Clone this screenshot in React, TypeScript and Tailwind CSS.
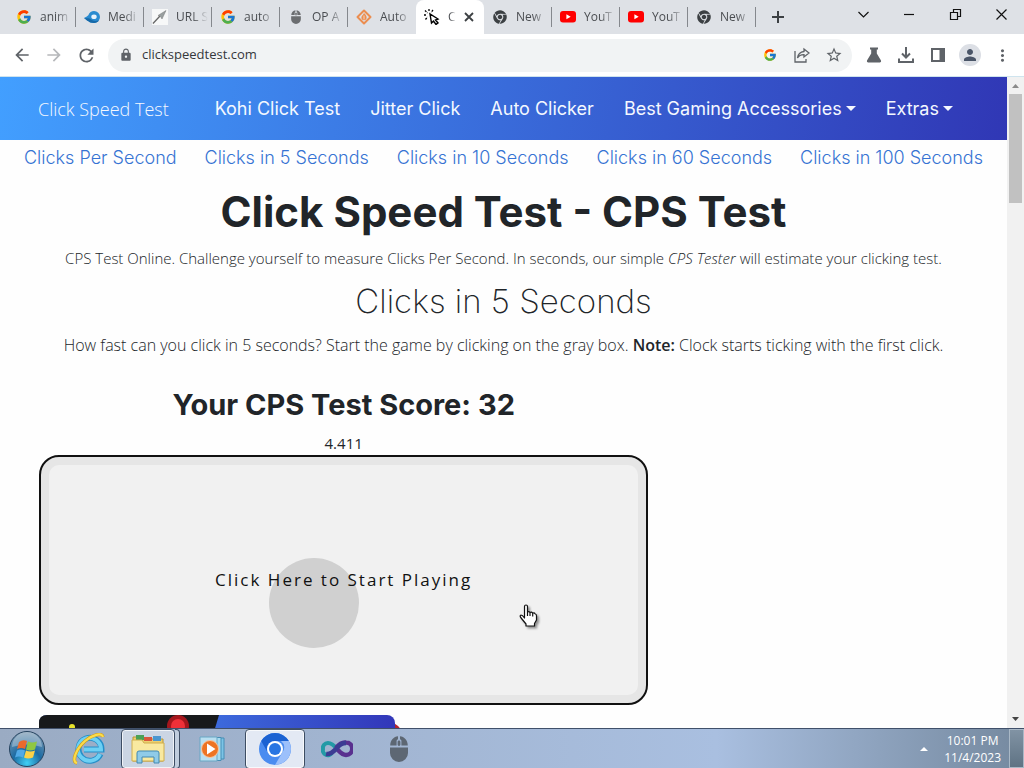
import React from "react";
import { FcGoogle } from "react-icons/fc";
import { FaChrome } from "react-icons/fa";
import {
  MdArrowBack,
  MdArrowForward,
  MdLock,
  MdMoreVert,
  MdPerson,
  MdRefresh,
  MdStarBorder,
} from "react-icons/md";

interface Tab {
  title: string;
  icon: React.ReactNode;
  active?: boolean;
  divider?: boolean;
}

const MouseIcon = ({ className }: { className: string }) => (
  <svg viewBox="0 0 18 26" className={className} aria-hidden="true">
    <path
      d="M8 0.3C3.800 0.700 0.300 4 0.200 9.500H6.600V4.500L8 3zM10 0.300C14.200 0.700 17.700 4 17.800 9.500H11.400V4.500L10 3zM0 11.500H18V17a9 9 0 0 1-18 0z"
      fill="currentColor"
    />
    <rect x="7.600" y="4.500" width="2.800" height="5.500" rx="1.400" fill="currentColor" />
  </svg>
);

const YoutubeIcon = () => (
  <svg viewBox="0 0 16 12" className="h-3 w-4" aria-hidden="true">
    <rect width="16" height="11.500" rx="3" fill="#f00" />
    <path d="M6.400 3.300v5l4.300-2.500z" fill="#fff" />
  </svg>
);

const MediaIcon = () => (
  <svg viewBox="0 0 16 12" className="h-3 w-4" aria-hidden="true">
    <path
      d="M0 7C2 6 3 5.500 4.300 4.200 5.500 1.300 7.500 0 10 0a6 6 0 0 1 0 12C7 12 5.500 11.300 4.500 10.300 3 9.500 2 8.500 0 7z"
      fill="#2a8bd0"
    />
    <path d="M0 7c2 1.500 3 2.500 4.500 3.300C5.500 11.300 7 12 10 12c2 0 4-1 5-2.800-4 1.500-7 .3-9-1.500C4 7 2 7.400 0 7z" fill="#1769a8" />
    <ellipse cx="10" cy="5.700" rx="2.700" ry="2.300" fill="#e7f2fb" />
  </svg>
);

const UrlIcon = () => (
  <svg viewBox="0 0 16 16" className="size-4" aria-hidden="true">
    <rect width="16" height="16" fill="#f7f8f8" />
    <path d="M1 14.500 8 7" stroke="#666" strokeWidth="1.300" />
    <path d="M6 6.500 14 1.500 10 10 8.500 7.500z" fill="#9aa0a0" stroke="#777" strokeWidth=".5" />
  </svg>
);

const SourceforgeIcon = () => (
  <svg viewBox="0 0 16 16" className="size-4" fill="none" aria-hidden="true">
    <path d="M8 1.500 14.500 8 8 14.500 1.500 8z" stroke="#eb8d50" strokeWidth="2" strokeLinejoin="round" />
    <path d="M8 4c2 2 2.600 3.200 2.600 4.600a2.600 2.600 0 0 1-5.200 0C5.400 7 7 6.300 8 4z" fill="#eb8d50" />
    <path d="M8 6.500v4" stroke="#f7d5bd" />
  </svg>
);

const ClickIcon = () => (
  <svg viewBox="0 0 16 16" className="size-4" fill="none" stroke="#000" aria-hidden="true">
    <path d="M6 5 7.500 14l2-2 2.500 3.500 2-1.500-2.500-3L14 10z" strokeWidth="1.400" />
    <path d="M5 0v3M1 1.500 3.500 4M0 6h3M9 1 7 3.500M1.500 10.500 3.500 8" strokeWidth="1.300" strokeDasharray="2 1" />
  </svg>
);

const tabs: Tab[] = [
  { title: "anim", icon: <FcGoogle size={16} />, divider: true },
  { title: "Medi", icon: <MediaIcon />, divider: true },
  { title: "URL S", icon: <UrlIcon />, divider: true },
  { title: "auto", icon: <FcGoogle size={16} />, divider: true },
  { title: "OP A", icon: <MouseIcon className="h-[14px] w-[10px] text-[#6b6d70]" />, divider: true },
  { title: "Auto", icon: <SourceforgeIcon /> },
  { title: "C", icon: <ClickIcon />, active: true },
  { title: "New", icon: <FaChrome size={14} color="#3c4043" />, divider: true },
  { title: "YouT", icon: <YoutubeIcon />, divider: true },
  { title: "YouT", icon: <YoutubeIcon />, divider: true },
  { title: "New", icon: <FaChrome size={14} color="#3c4043" />, divider: true },
];

const navLinks = [
  { label: "Kohi Click Test" },
  { label: "Jitter Click" },
  { label: "Auto Clicker" },
  { label: "Best Gaming Accessories", menu: true },
  { label: "Extras", menu: true },
];

const timeLinks = [
  "Clicks Per Second",
  "Clicks in 5 Seconds",
  "Clicks in 10 Seconds",
  "Clicks in 60 Seconds",
  "Clicks in 100 Seconds",
];

const TabStrip = () => (
  <div className="flex h-[34px] shrink-0 bg-[#dee1e6] pl-2">
    {tabs.map((tab, i) => (
      <button
        key={i}
        className={`flex w-[68px] shrink-0 items-center pl-2 text-left ${
          tab.active ? "rounded-t-lg bg-white" : ""
        }`}
      >
        <span className="flex w-4 shrink-0 justify-center">{tab.icon}</span>
        <span
          className={`ml-2 text-xs whitespace-nowrap text-[#4a4d51] ${
            tab.active
              ? "w-2 [mask-image:linear-gradient(to_right,#000_20%,transparent)]"
              : "w-8 [mask-image:linear-gradient(to_right,#000_50%,transparent)]"
          }`}
        >
          {tab.title}
        </span>
        {tab.active && (
          <svg viewBox="0 0 10 10" className="ml-2 size-[10px]" stroke="#3c4043" strokeWidth="1.800">
            <path d="m1 1 8 8M9 1 1 9" />
          </svg>
        )}
        {tab.divider && <span className="ml-auto h-5 w-px bg-[#85888d]" />}
      </button>
    ))}
    <button aria-label="New tab" className="flex w-11 items-center justify-center">
      <svg viewBox="0 0 12 12" className="size-3" stroke="#3c4043" strokeWidth="2">
        <path d="M6 0v12M0 6h12" />
      </svg>
    </button>
    <div className="ml-auto flex h-7">
      {[
        { label: "Search tabs", d: "M1.500 4 6.500 9l5-5" },
        { label: "Minimize", d: "M1 6.500h10" },
        { label: "Restore", d: "M1.500 4.500h7v7h-7zM4.500 4V1.500h7v7H9" },
        { label: "Close", d: "m1.500 1.500 10 10M11.500 1.500l-10 10" },
      ].map((item) => (
        <button
          key={item.label}
          aria-label={item.label}
          className="flex w-[46px] items-center justify-center"
        >
          <svg viewBox="0 0 13 13" className="size-[13px]" fill="none" stroke="#111" strokeWidth="1.200">
            <path d={item.d} />
          </svg>
        </button>
      ))}
    </div>
  </div>
);

const iconButton = "flex h-8 w-8 shrink-0 items-center justify-center";

const Toolbar = () => (
  <div className="flex h-[43px] shrink-0 items-center gap-[6px] border-b border-[#cfe4ee] bg-white px-[6px] text-[#5f6368]">
    <div className="flex">
      <button aria-label="Back" className={iconButton}>
        <MdArrowBack size={20} />
      </button>
      <button aria-label="Forward" className={`${iconButton} text-[#b6b8bb]`}>
        <MdArrowForward size={20} />
      </button>
      <button aria-label="Reload" className={iconButton}>
        <MdRefresh size={21} />
      </button>
    </div>
    <div className="flex h-[33px] flex-1 items-center rounded-full bg-[#f1f3f4] pr-[2px] pl-[11px]">
      <MdLock size={14} />
      <input
        aria-label="Address"
        defaultValue="clickspeedtest.com"
        className="ml-[9px] min-w-0 flex-1 bg-transparent text-[13px] text-[#35383b] outline-none"
      />
      <button aria-label="Search with Google" className={iconButton}>
        <FcGoogle size={14} />
      </button>
      <button aria-label="Share" className={iconButton}>
        <svg viewBox="0 0 16 16" className="size-4" fill="none" stroke="currentColor" strokeWidth="1.300">
          <path d="M1 4v11h11v-3" />
          <path d="M10 2l5 4-5 4V7.700C7 7.600 5 8.500 3.500 11 4 7.300 6 5 10 4.500z" />
        </svg>
      </button>
      <button aria-label="Bookmark" className={iconButton}>
        <MdStarBorder size={18} />
      </button>
    </div>
    <div className="flex">
      <button aria-label="Experiments" className={iconButton}>
        <svg viewBox="0 0 16 16" className="size-4" fill="currentColor">
          <path d="M4 0.500h8v2h-1.200v4L15 13.500q.6 1.700-1 2H2q-1.600-.3-1-2L5.200 6.500v-4H4z" />
        </svg>
      </button>
      <button aria-label="Downloads" className={iconButton}>
        <svg viewBox="0 0 16 16" className="size-4" fill="none" stroke="currentColor" strokeWidth="2">
          <path d="M8 0v10M4 6.500l4 4 4-4M1 11.500V15h14v-3.500" />
        </svg>
      </button>
      <button aria-label="Side panel" className={iconButton}>
        <svg viewBox="0 0 16 16" className="size-4" fill="none" stroke="currentColor" strokeWidth="2">
          <path d="M2 2h12v12H2z" />
          <path d="M12 2v12" strokeWidth="5" />
        </svg>
      </button>
      <button aria-label="Profile" className={iconButton}>
        <span className="flex size-[22px] items-center justify-center rounded-full bg-[#dcdfe5] text-[#4a5568]">
          <MdPerson size={18} />
        </span>
      </button>
      <button aria-label="Menu" className={iconButton}>
        <MdMoreVert size={19} />
      </button>
    </div>
  </div>
);

const HandCursor = () => (
  <svg viewBox="0 0 20 24" className="absolute top-[149px] left-[480px] h-6 w-5 drop-shadow-[2px_2px_1px_rgba(0,0,0,0.4)]" aria-hidden="true">
    <path
      d="M5.500 14V2.500a1.500 1.500 0 0 1 3 0V8q1.500-1 2.500.5 1.700-1 2.700.7 1.600-.7 2.600.8 1.200 0 1.200 2v4l-2 3.500V22H7v-2L2.500 14.500Q0 11.500 2 11q1.500 0 3.500 3zM8.500 8v4M11 8.500V12M13.700 9.200V12.500"
      fill="#fff"
      stroke="#111"
      strokeWidth="1.200"
      strokeLinejoin="round"
    />
  </svg>
);

const ScrollBar = () => (
  <div className="flex w-[17px] shrink-0 flex-col items-center bg-[#f1f1f1]">
    <svg viewBox="0 0 17 17" className="size-[17px] shrink-0" fill="#8a8a8a">
      <path d="M5 11h7L8.500 7z" />
    </svg>
    <div className="h-[109px] w-[13px] bg-[#c1c1c1]" />
    <svg viewBox="0 0 17 17" className="mt-auto size-[17px] shrink-0" fill="#444">
      <path d="M5 6h7l-3.500 4z" />
    </svg>
  </div>
);

const Page = () => (
  <main className="min-w-0 flex-1 overflow-hidden bg-[#fefefe] text-[#212529]">
    <nav className="flex h-[63px] items-center bg-linear-[100deg] from-[#429fff] to-[#3037b5] pr-[54px] pl-[38px] text-[#f4f8ff]">
      <a href="#" className="font-['Open_Sans'] text-lg font-light whitespace-nowrap">
        Click Speed Test
      </a>
      <div className="ml-[46px] flex flex-1 justify-between font-['Inter'] text-[18px] whitespace-nowrap">
        {navLinks.map((link) => (
          <a key={link.label} href="#" className="flex items-center gap-1">
            {link.label}
            {link.menu && (
              <svg viewBox="0 0 10 5" className="h-[5px] w-[10px]" fill="currentColor">
                <path d="M0 0h10L5 5z" />
              </svg>
            )}
          </a>
        ))}
      </div>
    </nav>
    <div className="flex h-[34px] items-center justify-between px-6 font-['Inter'] text-[18px] font-light whitespace-nowrap text-[#3673d3]">
      {timeLinks.map((label) => (
        <a key={label} href="#">
          {label}
        </a>
      ))}
    </div>

    <div className="px-6">
      <header className="text-center">
        <h1 className="mt-[14px] font-['Inter'] text-[42px] leading-12 font-bold">
          Click Speed Test - CPS Test
        </h1>
        <p className="mt-[10px] font-['Open_Sans'] text-[15px] leading-6 font-light">
          CPS Test Online. Challenge yourself to measure Clicks Per Second. In seconds, our simple{" "}
          <i>CPS Tester</i> will estimate your clicking test.
        </p>
        <h2 className="mt-[11px] font-['Inter'] text-[33px] leading-10 font-extralight">
          Clicks in 5 Seconds
        </h2>
        <p className="mt-3 font-['Open_Sans'] text-base leading-6 font-light">
          How fast can you click in 5 seconds? Start the game by clicking on the gray box.{" "}
          <b className="font-semibold">Note:</b> Clock starts ticking with the first click.
        </p>
      </header>

      <section className="w-2/3 px-[15px]">
        <h3 className="mt-8 text-center font-['Inter'] text-[29px] leading-8 font-bold">
          Your CPS Test Score: 32
        </h3>
        <p className="mt-[10px] text-center font-['Open_Sans'] text-[15px] leading-6">4.411</p>
        <div className="relative">
          <button className="relative block h-[250px] w-full overflow-hidden rounded-[20px] border-2 border-[#111] bg-[#f1f1f1] font-['Open_Sans'] text-[17px] tracking-[2px] text-[#111] shadow-[inset_0_0_0_8px_#e6e6e6]">
            {/* Click ripple */}
            <span className="absolute top-[101px] left-[228px] size-[90px] rounded-full bg-[#d0d0d0]" />
            <span className="relative">Click Here to Start Playing</span>
          </button>
          <HandCursor />
        </div>
        <svg viewBox="0 0 364 60" className="mt-[10px] h-[60px] w-[364px]" aria-hidden="true">
          <defs>
            <linearGradient id="banner">
              <stop offset="0.5" stopColor="#3c69dc" />
              <stop offset="1" stopColor="#3237b9" />
            </linearGradient>
          </defs>
          <circle cx="352" cy="18" r="10" fill="#b32630" />
          <rect width="356" height="60" rx="8" fill="url(#banner)" />
          <path d="M8 0H180L162 60H0V8Q0 0 8 0z" fill="#17191b" />
          <circle cx="139" cy="11" r="11" fill="#a5161c" />
          <circle cx="139" cy="11" r="7" fill="#ef3038" />
          <circle cx="33" cy="12" r="3" fill="#e7e32c" />
        </svg>
      </section>
    </div>
  </main>
);

const StartIcon = () => (
  <svg viewBox="0 0 38 38" className="size-[38px]">
    <defs>
      <radialGradient id="orb" cx="0.5" cy="0.9" r="0.9">
        <stop offset="0" stopColor="#3fd0f5" />
        <stop offset="0.45" stopColor="#1c6ba3" />
        <stop offset="1" stopColor="#7f9bb3" />
      </radialGradient>
    </defs>
    <circle cx="19" cy="19" r="17.500" fill="url(#orb)" stroke="#26435f" />
    <path d="M4 17a15 15 0 0 1 30 0q-15-5-30 0z" fill="#fff" opacity=".3" />
    <path d="M11 12q4-3 8-1l-2 8q-4-2-8 0z" fill="#ec6a2c" />
    <path d="M20 11.500q4 2 9 0l-2 8q-5 2-9 0z" fill="#8fc741" />
    <path d="M9 20.500q4-2 8 0l-2 7q-4-2-8 0z" fill="#51a9e6" />
    <path d="M18 20.500q4 2 9 0l-2 7q-5 2-9 0z" fill="#fbd147" />
  </svg>
);

const IeIcon = () => (
  <svg viewBox="0 0 34 32" className="h-8 w-[34px]" fill="none">
    <path d="M28.500 21a11.500 11.500 0 1 1 1-4.500H12" stroke="#258fc9" strokeWidth="6" />
    <path d="M28 21a11.500 11.500 0 1 1 1-4.500H12" stroke="#6dd0f4" strokeWidth="4" />
    <path d="M5 30C-1 29 4 16 13 8 20 2 30-1 31 4" stroke="#d59e16" strokeWidth="3.400" />
    <path d="M5 30C-1 29 4 16 13 8 20 2 30-1 31 4" stroke="#fbdc4b" strokeWidth="2.200" />
  </svg>
);

const ExplorerIcon = () => (
  <svg viewBox="0 0 34 30" className="h-[30px] w-[34px]">
    <path d="M2 3h9l2 2h19v22H2z" fill="#ecd06f" stroke="#b79536" />
    <path d="M5 1h8v5H5z" fill="#4aa157" />
    <path d="M13 3h8v4h-8z" fill="#d9573c" />
    <path d="M22 2h8v5h-8z" fill="#4b97d0" />
    <path d="M1 6h10l2 3h20v18H1z" fill="#f9e9a0" stroke="#d0ae4d" />
    <path d="M6 29V19q0-2 2-2h18q2 0 2 2v10h-5v-6H11v6z" fill="#8fcbe8" stroke="#4289b2" />
  </svg>
);

const PlayerIcon = () => (
  <svg viewBox="0 0 28 26" className="h-[26px] w-7">
    <path d="M10 2h15v21H10z" fill="#7cc4e6" stroke="#468eb5" />
    <path d="M6 1.500h16v23H6z" fill="#a6dbf0" stroke="#468eb5" />
    <path d="M1 1h17v24H1z" fill="#b9dff0" stroke="#69a7c4" />
    <circle cx="11" cy="13" r="8.500" fill="#ed7423" stroke="#f7c7a1" />
    <path d="M8 7.500v11l8.500-5.500z" fill="#fff" />
  </svg>
);

const ChromiumIcon = () => (
  <svg viewBox="0 0 32 32" className="size-8">
    <circle cx="16" cy="16" r="16" fill="#4a8cf0" />
    <path d="M2.200 8A16 16 0 0 1 29.800 8H16a8 8 0 0 0-7 12z" fill="#1b62d2" />
    <path d="M29.800 8A16 16 0 0 1 16 32l7-12a8 8 0 0 0-1-12z" fill="#9cc0fb" />
    <circle cx="16" cy="16" r="8" fill="#fff" />
    <circle cx="16" cy="16" r="6" fill="#2875e2" />
  </svg>
);

const VisualStudioIcon = () => (
  <svg viewBox="0 0 32 18" className="h-[18px] w-8" fill="none">
    <path d="M16 9C12 4 9 3 7 3a5 5 0 0 0-5 6 5 5 0 0 0 9 4" stroke="#239aa6" strokeWidth="4" />
    <path d="M15 8C19 3 22 2 25 2.500A6 6 0 0 1 25 15c-4 0-6-3-9-6" stroke="#59308f" strokeWidth="4.500" />
    <path d="M5 14c5 1 8-3 11-6 3-4 6-5 9-5" stroke="#3b3c93" strokeWidth="4.500" />
  </svg>
);

const taskButton = "flex h-10 w-[60px] items-center justify-center";
const openTask =
  "rounded-sm border border-[#3d4d63] shadow-[inset_0_0_0_1px_rgba(255,255,255,0.7)]";

const Taskbar = () => (
  <footer className="flex h-10 shrink-0 items-center gap-[2px] border-t border-[#40506a] bg-linear-to-r from-[#9aabc3] via-[#a9bfe0] via-70% to-[#75899f]">
    <button aria-label="Start" className="mr-[3px] flex w-[54px] justify-center">
      <StartIcon />
    </button>
    <button aria-label="Internet Explorer" className={taskButton}>
      <IeIcon />
    </button>
    <div className="flex h-10 w-[60px] items-center">
      <button
        aria-label="Windows Explorer"
        className={`flex h-10 w-[54px] items-center justify-center bg-[#cbd5e3] ${openTask}`}
      >
        <ExplorerIcon />
      </button>
      <span className="h-10 w-[5px] rounded-r-sm border border-l-0 border-[#3d4d63] bg-[#c0cddd]" />
    </div>
    <button aria-label="Media Player" className={taskButton}>
      <PlayerIcon />
    </button>
    <button aria-label="Chromium" className={`${taskButton} bg-[#e3e9f4] ${openTask}`}>
      <ChromiumIcon />
    </button>
    <button aria-label="Visual Studio" className={taskButton}>
      <VisualStudioIcon />
    </button>
    <button aria-label="OP Auto Clicker" className={taskButton}>
      <MouseIcon className="h-[26px] w-[18px] text-[#5d6773]" />
    </button>
    <div className="ml-auto flex h-full items-center text-xs text-white">
      <button aria-label="Show hidden icons" className="mr-4">
        <svg viewBox="0 0 8 4" className="h-1 w-2" fill="#fff">
          <path d="M0 4h8L4 0z" />
        </svg>
      </button>
      <div className="mr-2 text-center leading-[17px]">
        <div>10:01 PM</div>
        <div>11/4/2023</div>
      </div>
      <button
        aria-label="Show desktop"
        className="h-full w-[15px] border border-[#a9b8c6] bg-linear-to-b from-[#8193a4] to-[#5f7384]"
      />
    </div>
  </footer>
);

export default function App() {
  return (
    <div className="flex h-screen flex-col overflow-hidden font-['Open_Sans','Noto_Sans',sans-serif]">
      <TabStrip />
      <Toolbar />
      <div className="flex min-h-0 flex-1">
        <Page />
        <ScrollBar />
      </div>
      <Taskbar />
    </div>
  );
}
